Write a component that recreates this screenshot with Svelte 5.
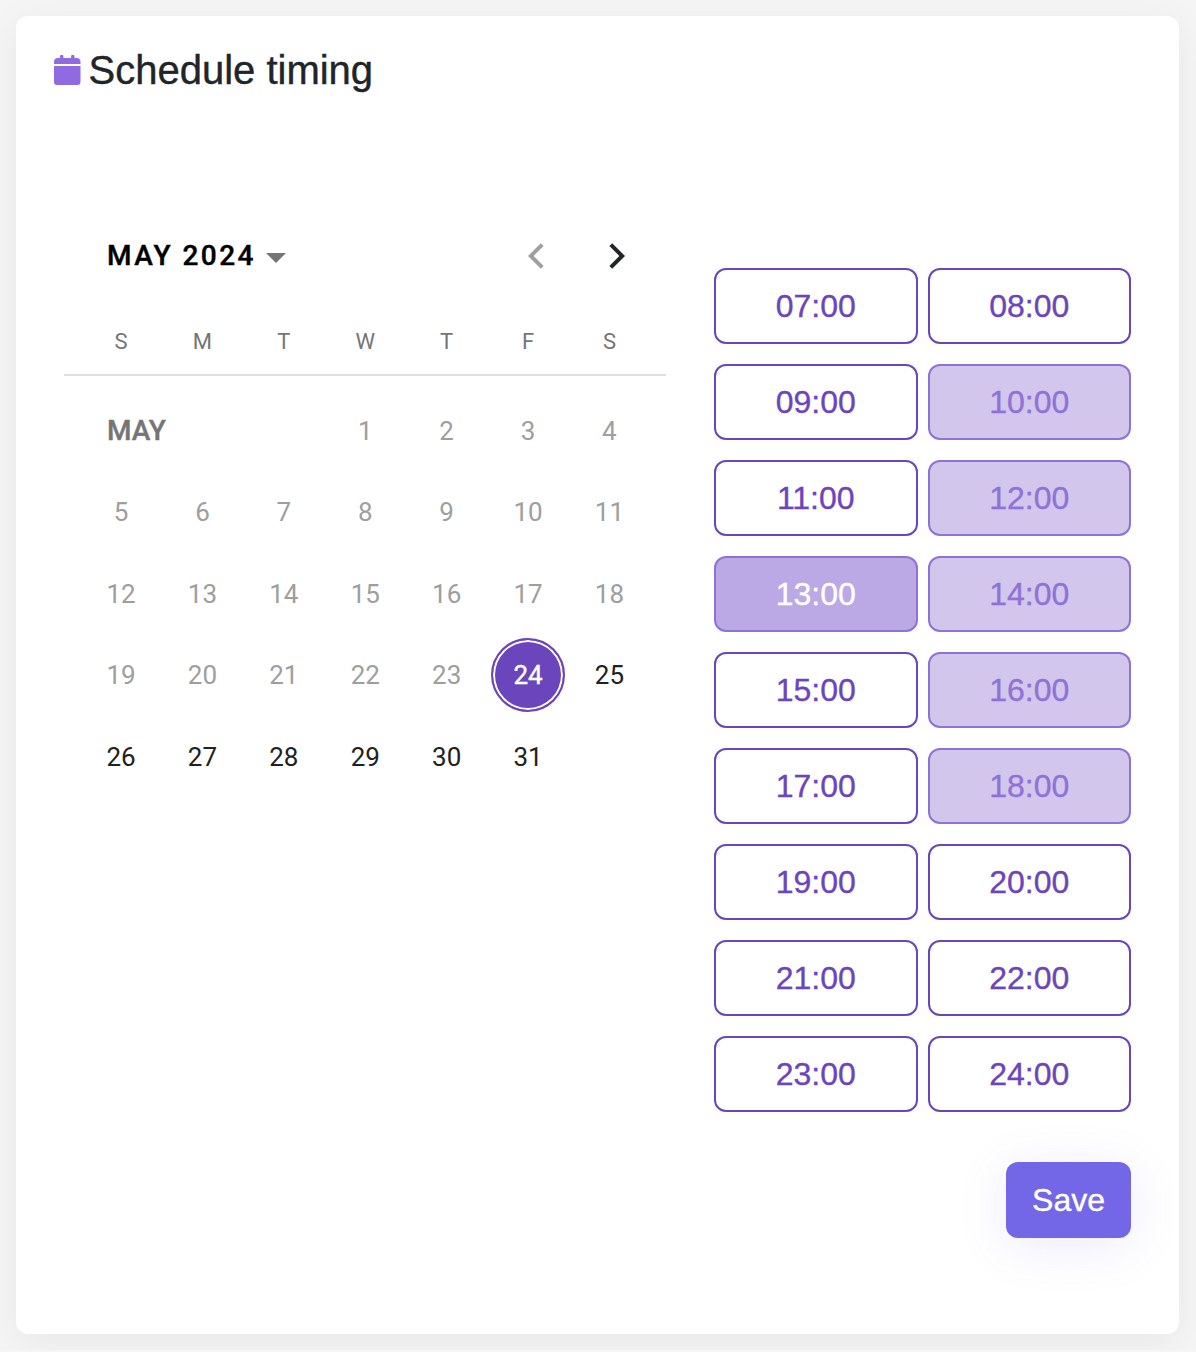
<script>
  const weekdays = ['S', 'M', 'T', 'W', 'T', 'F', 'S'];
  const days = Array.from({ length: 31 }, (_, i) => i + 1);
  const today = 24;
  const reserved = [10, 12, 14, 16, 18];
  const chosen = 13;
  const hours = Array.from({ length: 18 }, (_, i) => i + 7);
  const label = (h) => `${String(h).padStart(2, '0')}:00`;
</script>

<main class="card">
  <h1 class="title">
    <svg class="title-icon" viewBox="0 0 27 31" aria-hidden="true">
      <path d="M0 9V7a4 4 0 0 1 4-4h2V1.500a1.700 1.700 0 0 1 3.400 0V3h7.700V1.500a1.700 1.700 0 0 1 3.400 0V3H22.500a4 4 0 0 1 4 4v2z" />
      <path d="M0 11h26.500v16a3 3 0 0 1-3 3H3a3 3 0 0 1-3-3z" />
    </svg>
    <span>Schedule timing</span>
  </h1>

  <div class="body">
    <section class="calendar">
      <header class="cal-head">
        <button class="period">
          <span>MAY 2024</span>
          <svg class="caret" viewBox="0 0 20 10"><path d="M0 0h20L10 10z" /></svg>
        </button>
        <nav class="arrows">
          <button class="arrow off" aria-label="Previous month">
            <svg viewBox="0 0 16 26"><path d="M14.200 1.600 2.800 13l11.400 11.400" /></svg>
          </button>
          <button class="arrow" aria-label="Next month">
            <svg viewBox="0 0 16 26"><path d="M1.800 1.600 13.200 13 1.800 24.400" /></svg>
          </button>
        </nav>
      </header>
      <div class="week">
        {#each weekdays as d}<span>{d}</span>{/each}
      </div>
      <div class="grid">
        <span class="month">MAY</span>
        {#each days as d}
          <button class="day" class:past={d < today}>
            <span class:today={d === today}>{d}</span>
          </button>
        {/each}
      </div>
    </section>

    <section class="times">
      <div class="slots">
        {#each hours as h}
          <button class="slot" class:reserved={reserved.includes(h)} class:chosen={h === chosen}>{label(h)}</button>
        {/each}
      </div>
      <button class="save">Save</button>
    </section>
  </div>
</main>

<style>
  :global(body) {
    background: #f5f5f5;
    font-family: 'Liberation Sans', Arial, sans-serif;
    overflow: hidden;
  }
  :global(#app) {
    display: flow-root;
  }
  button {
    border: 0;
    padding: 0;
    background: none;
    font: inherit;
    color: inherit;
  }
  .card {
    box-sizing: border-box;
    width: 1163px;
    height: 1318px;
    margin: 16px;
    padding: 30px 48px 0 38px;
    border-radius: 12px;
    background: #fff;
    box-shadow: 0 8px 40px rgba(0, 0, 0, 0.06);
  }
  .title {
    display: flex;
    align-items: center;
    gap: 7.5px;
    height: 48px;
    margin: 0;
    font-size: 40px;
    font-weight: 400;
    line-height: 48px;
    color: #212529;
    -webkit-text-stroke: 0.4px currentColor;
  }
  .title-icon {
    width: 27px;
    height: 31px;
    fill: #8f6ae0;
    stroke: none;
  }
  .body {
    display: flex;
    justify-content: space-between;
    padding-left: 10px;
  }
  .calendar {
    width: 602px;
    padding-top: 122px;
    font-family: Roboto, sans-serif;
  }
  .cal-head {
    display: flex;
    justify-content: space-between;
    align-items: center;
    height: 80px;
    padding: 0 8px 0 43px;
  }
  .period {
    display: flex;
    align-items: center;
    gap: 10.5px;
    padding-bottom: 2px;
    font-size: 28px;
    font-weight: 500;
    letter-spacing: 2.42px;
    color: #000;
    -webkit-text-stroke: 0.4px currentColor;
  }
  .caret {
    width: 20px;
    height: 10px;
    margin-top: 5px;
    fill: #757575;
  }
  .arrows {
    display: flex;
  }
  .arrow {
    display: flex;
    justify-content: center;
    align-items: center;
    width: 81.4px;
    height: 80px;
    color: #212529;
  }
  .arrow.off {
    color: #9f9f9f;
  }
  .arrow svg {
    width: 16px;
    height: 26px;
    fill: none;
    stroke: currentColor;
    stroke-width: 4;
  }
  .week,
  .grid {
    display: grid;
    grid-template-columns: repeat(7, 81.4px);
    padding: 0 16px 0 16.4px;
  }
  .week {
    box-sizing: border-box;
    height: 80px;
    margin-bottom: 14.3px;
    border-bottom: 2px solid #e0e0e0;
    font-size: 22px;
    line-height: 91px;
    text-align: center;
    color: #757575;
  }
  .grid {
    grid-auto-rows: 81.4px;
    align-items: center;
    font-size: 26px;
  }
  .month {
    grid-column: span 3;
    padding-left: 26.6px;
    font-size: 28px;
    font-weight: 500;
    color: #757575;
    -webkit-text-stroke: 0.4px currentColor;
  }
  .day {
    display: flex;
    justify-content: center;
    align-items: center;
    color: #212121;
  }
  .past {
    color: #9e9e9e;
  }
  .today {
    box-sizing: border-box;
    width: 74px;
    height: 74px;
    border: 2px solid #6b45bc;
    border-radius: 50%;
    background: #6b45bc;
    box-shadow: inset 0 0 0 2px #fff;
    color: #fff;
    line-height: 70px;
    text-align: center;
    -webkit-text-stroke: 0.4px currentColor;
  }
  .times {
    display: flex;
    flex-direction: column;
    align-items: flex-end;
    width: 417px;
    padding-top: 174px;
    font-size: 32px;
    -webkit-text-stroke: 0.35px currentColor;
  }
  .slots {
    display: grid;
    grid-template-columns: 1fr 1fr;
    gap: 20px 10px;
    width: 100%;
  }
  .slot {
    height: 76px;
    border: 2px solid #6b45bc;
    border-radius: 12px;
    color: #6b45bc;
  }
  .reserved {
    border-color: #8f72d8;
    background: #d2c6ed;
    color: #8f72d8;
  }
  .chosen {
    border-color: #8f72d8;
    background: #bba9e5;
    color: #fff;
  }
  .save {
    width: 125px;
    height: 76px;
    margin-top: 50px;
    border-radius: 12px;
    background: #7367e8;
    box-shadow: 0 8px 50px rgba(115, 103, 240, 0.13);
    color: #fff;
  }
</style>
